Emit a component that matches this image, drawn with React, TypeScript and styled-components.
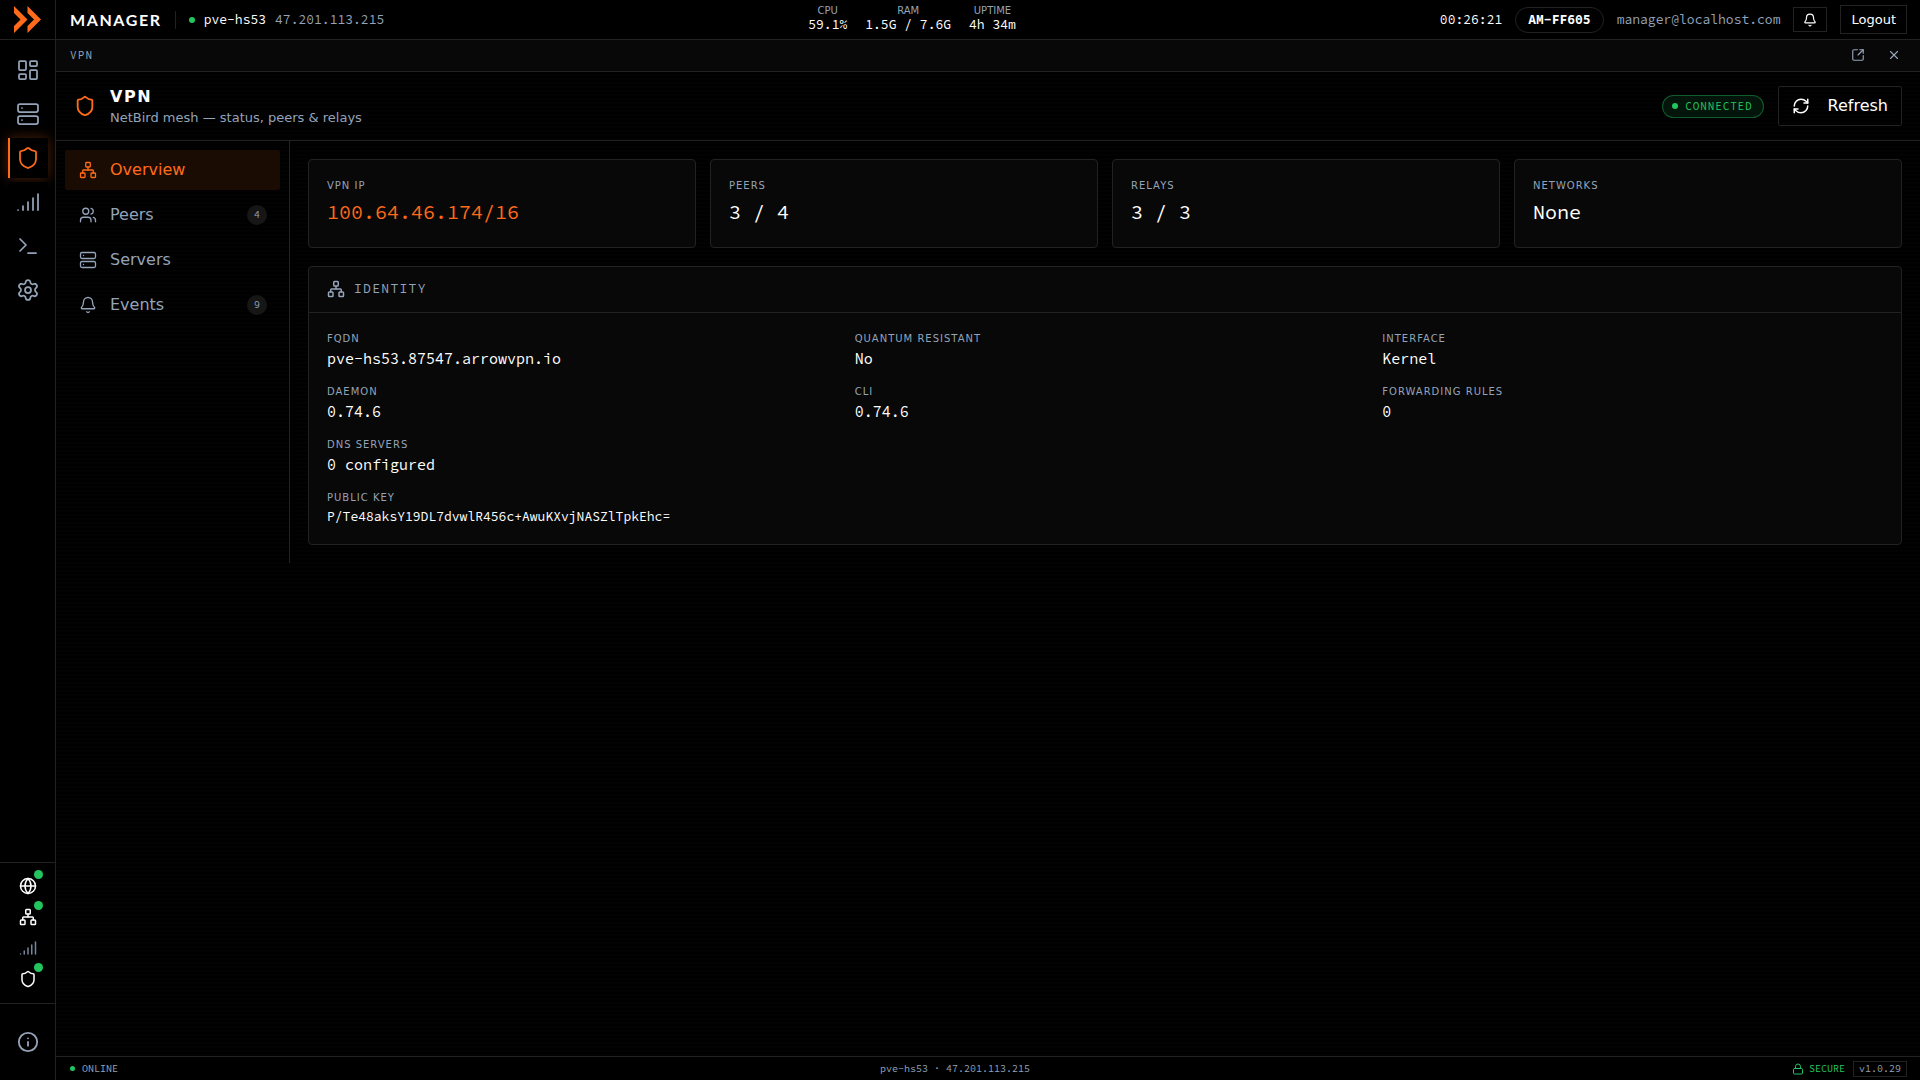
import React from "react";
import styled, { createGlobalStyle } from "styled-components";
import {
  Bell, Globe, Info, LayoutDashboard, Lock, Network, RefreshCw, Server, Settings,
  Shield, Signal, SquareArrowOutUpRight, Terminal, Users, X,
} from "lucide-react";

const sans = `"DejaVu Sans", sans-serif`;
const mono = `"Source Code Pro", "DejaVu Sans Mono", monospace`;
const line = "#222";
const muted = "#94a3b8";
const accent = "#ff6b1a";
const green = "#22c55e";

const Global = createGlobalStyle`
  * { box-sizing: border-box; }
  body { margin: 0; background: #000; color: #fff; font-family: ${sans}; font-size: 16px; }
  button { font: inherit; color: inherit; cursor: pointer; }
  h1, h2, p, dl, dd { margin: 0; font-weight: inherit; }
`;

const Shell = styled.div`
  display: grid;
  grid-template-columns: 56px minmax(0, 1fr);
  min-height: 100vh;
`;
const Rail = styled.aside`
  display: flex;
  flex-direction: column;
  border-right: 1px solid ${line};
`;
const Brand = styled.a`
  display: flex;
  align-items: center;
  justify-content: center;
  height: 40px;
  border-bottom: 1px solid ${line};
`;
const RailNav = styled.nav`
  flex: 1;
  display: flex;
  flex-direction: column;
  align-items: center;
  gap: 4px;
  padding-top: 10px;
`;
const RailButton = styled.button<{ $active?: boolean }>`
  display: flex;
  align-items: center;
  justify-content: center;
  width: 40px;
  height: 40px;
  padding: 0;
  border: 0;
  background: #000;
  color: ${(p) => (p.$active ? accent : muted)};
  box-shadow: ${(p) => (p.$active ? `inset 2px 0 0 ${accent}, 0 0 12px rgba(255, 107, 26, 0.3)` : "none")};
`;
const StatusList = styled.ul`
  display: flex;
  flex-direction: column;
  align-items: center;
  gap: 13px;
  margin: 0;
  padding: 14px 0 15px;
  list-style: none;
  border-top: 1px solid ${line};
  border-bottom: 1px solid ${line};
`;
const StatusItem = styled.li<{ $on: boolean }>`
  position: relative;
  display: flex;
  color: ${(p) => (p.$on ? "#fff" : "#7686a0")};
`;
const StatusDot = styled.span`
  position: absolute;
  top: -7px;
  right: -6px;
  width: 9px;
  height: 9px;
  border-radius: 50%;
  background: ${green};
`;
const RailFoot = styled.div`
  display: flex;
  justify-content: center;
  padding: 18px 0;
`;

const Main = styled.div`
  display: flex;
  flex-direction: column;
  min-width: 0;
`;
const Topbar = styled.header`
  display: flex;
  align-items: center;
  justify-content: space-between;
  height: 40px;
  padding: 0 13px 0 14px;
  border-bottom: 1px solid ${line};
  font: 13px/16px ${mono};
`;
const Group = styled.div<{ $gap: number }>`
  display: flex;
  align-items: center;
  gap: ${(p) => p.$gap}px;
`;
const Wordmark = styled.strong`
  font: 700 16px/20px Lato, sans-serif;
  letter-spacing: 0.1em;
`;
const Divider = styled.span`
  width: 1px;
  height: 18px;
  background: ${line};
`;
const Dot = styled.span<{ $size: number }>`
  width: ${(p) => p.$size}px;
  height: ${(p) => p.$size}px;
  border-radius: 50%;
  background: ${green};
`;
const Muted = styled.span`
  color: ${muted};
`;
const Stat = styled.div`
  display: flex;
  flex-direction: column;
  align-items: center;
  padding-bottom: 2px;
`;
const StatLabel = styled.span`
  font: 10px/12px ${sans};
  color: ${muted};
`;
const Tag = styled.span`
  padding: 4px 12px;
  border: 1px solid ${line};
  border-radius: 13px;
  font-weight: 700;
`;
const IconButton = styled.button`
  display: flex;
  align-items: center;
  justify-content: center;
  width: 34px;
  height: 25px;
  padding: 0;
  border: 1px solid ${line};
  background: transparent;
`;
const Logout = styled.button`
  height: 29px;
  padding: 0 10px;
  border: 1px solid ${line};
  background: transparent;
  font: 13px/16px ${sans};
`;

const TabBar = styled.div`
  display: flex;
  align-items: center;
  justify-content: space-between;
  height: 32px;
  padding: 0 13px 1px 14px;
  border-bottom: 1px solid ${line};
  background: #080808;
  color: ${muted};
  font: 11px/16px ${mono};
  letter-spacing: 0.1em;
`;
const PlainButton = styled.button`
  display: flex;
  padding: 6px;
  border: 0;
  background: transparent;
`;

const Page = styled.main`
  flex: 1;
  background: repeating-linear-gradient(180deg, #000 0 2px, #020202 2px 4px);
`;
const PageHead = styled.div`
  display: flex;
  align-items: center;
  justify-content: space-between;
  height: 69px;
  padding: 0 18px;
  border-bottom: 1px solid ${line};
`;
const Heading = styled.div`
  padding-top: 4px;
`;
const Title = styled.h1`
  font-size: 16px;
  font-weight: 700;
  line-height: 20px;
  letter-spacing: 0.1em;
`;
const Subtitle = styled.p`
  font-size: 13px;
  line-height: 22px;
  color: ${muted};
`;
const Connected = styled.span`
  display: flex;
  align-items: center;
  gap: 7px;
  height: 23px;
  padding: 0 10px 0 9px;
  border: 1px solid rgba(34, 197, 94, 0.4);
  border-radius: 12px;
  background: rgba(34, 197, 94, 0.1);
  color: ${green};
  font: 11px/16px ${mono};
  letter-spacing: 0.08em;
`;
const Refresh = styled.button`
  display: flex;
  align-items: center;
  gap: 18px;
  height: 40px;
  padding: 0 13px 1px;
  border: 1px solid ${line};
  border-radius: 2px;
  background: transparent;
`;

const Body = styled.div`
  display: grid;
  grid-template-columns: 234px minmax(0, 1fr);
`;
const SideNav = styled.nav`
  display: flex;
  flex-direction: column;
  gap: 5px;
  padding: 9px;
  border-right: 1px solid ${line};
`;
const SideLink = styled.a<{ $active?: boolean }>`
  display: flex;
  align-items: center;
  gap: 13px;
  height: 40px;
  padding: 0 13px 1px 14px;
  border-radius: 2px;
  background: ${(p) => (p.$active ? "#1a0b03" : "transparent")};
  color: ${(p) => (p.$active ? accent : muted)};
  text-decoration: none;
`;
const Count = styled.span`
  margin-left: auto;
  width: 20px;
  border-radius: 10px;
  background: #161616;
  font: 10px/20px ${mono};
  text-align: center;
`;
const Content = styled.div`
  display: flex;
  flex-direction: column;
  gap: 18px;
  padding: 18px;
`;
const Cards = styled.div`
  display: grid;
  grid-template-columns: repeat(4, minmax(0, 1fr));
  gap: 14px;
`;
const Panel = styled.section`
  border: 1px solid ${line};
  border-radius: 4px;
  background: #080808;
`;
const Card = styled(Panel)`
  padding: 18px;
  height: 89px;
`;
const Label = styled.dt`
  font-size: 10px;
  line-height: 16px;
  letter-spacing: 1px;
  color: ${muted};
`;
const Big = styled.dd<{ $accent?: boolean }>`
  margin-top: 4px;
  color: ${(p) => (p.$accent ? accent : "#fff")};
  font: 20px/28px ${mono};
`;
const PanelHead = styled.h2`
  display: flex;
  align-items: center;
  gap: 9px;
  height: 46px;
  padding: 0 18px 1px;
  border-bottom: 1px solid ${line};
  color: ${muted};
  font: 13px/16px ${mono};
  letter-spacing: 0.1em;
`;
const Fields = styled.dl`
  display: grid;
  grid-template-columns: repeat(3, minmax(0, 1fr));
  gap: 14px 27px;
  padding: 18px 18px 17px;
`;
const Field = styled.div<{ $wide?: boolean }>`
  grid-column: ${(p) => (p.$wide ? "1 / -1" : "auto")};
`;
const Value = styled.dd<{ $small?: boolean }>`
  margin-top: 1px;
  font: ${(p) => (p.$small ? "13px/20px" : "15px/22px")} ${mono};
`;

const Footer = styled.footer`
  display: flex;
  align-items: center;
  justify-content: space-between;
  height: 24px;
  padding: 0 13px 0 14px;
  border-top: 1px solid ${line};
  color: ${muted};
  font: 10px/14px ${mono};
`;
const Secure = styled.span`
  display: flex;
  align-items: center;
  gap: 5px;
  color: ${green};
`;
const Version = styled.span`
  padding: 0 5px;
  border: 1px solid ${line};
`;

const rail = [
  ["Dashboard", LayoutDashboard], ["Servers", Server], ["VPN", Shield],
  ["Signal", Signal], ["Terminal", Terminal], ["Settings", Settings],
] as const;
const statuses = [
  ["web", Globe, true], ["network", Network, true], ["signal", Signal, false], ["vpn", Shield, true],
] as const;
const stats = [["CPU", "59.1%"], ["RAM", "1.5G / 7.6G"], ["UPTIME", "4h 34m"]];
const sections = [
  ["Overview", Network, ""], ["Peers", Users, "4"], ["Servers", Server, ""], ["Events", Bell, "9"],
] as const;
const cards = [["VPN IP", "100.64.46.174/16"], ["PEERS", "3 / 4"], ["RELAYS", "3 / 3"], ["NETWORKS", "None"]];
const fields = [
  ["FQDN", "pve-hs53.87547.arrowvpn.io"], ["QUANTUM RESISTANT", "No"], ["INTERFACE", "Kernel"],
  ["DAEMON", "0.74.6"], ["CLI", "0.74.6"], ["FORWARDING RULES", "0"], ["DNS SERVERS", "0 configured"],
];

export default function App() {
  return (
    <Shell>
      <Global />
      <Rail>
        <Brand href="#" aria-label="Manager home">
          <svg width="27" height="27" viewBox="0 0 27 27" fill={accent}>
            <path d="M0 0 13.5 13.5 0 27V20L6.5 13.5 0 7Z" />
            <path d="M13.5 0 27 13.5 13.5 27V20L20 13.5 13.5 7Z" />
          </svg>
        </Brand>
        <RailNav aria-label="Main">
          {rail.map(([name, Icon]) => (
            <RailButton key={name} aria-label={name} $active={name === "VPN"}>
              <Icon size={24} strokeWidth={1.75} />
            </RailButton>
          ))}
        </RailNav>
        <StatusList>
          {statuses.map(([name, Icon, on]) => (
            <StatusItem key={name} $on={on}>
              <Icon size={18} strokeWidth={2} />
              {on && <StatusDot />}
            </StatusItem>
          ))}
        </StatusList>
        <RailFoot>
          <RailButton aria-label="About"><Info size={22} strokeWidth={2} /></RailButton>
        </RailFoot>
      </Rail>
      <Main>
        <Topbar>
          <Group $gap={13}>
            <Wordmark>MANAGER</Wordmark>
            <Divider />
            <Group $gap={9}>
              <Dot $size={6} />
              <span>pve-hs53</span>
              <Muted>47.201.113.215</Muted>
            </Group>
          </Group>
          <Group $gap={18}>
            {stats.map(([name, value]) => (
              <Stat key={name}><StatLabel>{name}</StatLabel><span>{value}</span></Stat>
            ))}
          </Group>
          <Group $gap={13}>
            <span>00:26:21</span>
            <Tag>AM-FF605</Tag>
            <Muted>manager@localhost.com</Muted>
            <IconButton aria-label="Notifications"><Bell size={14} /></IconButton>
            <Logout>Logout</Logout>
          </Group>
        </Topbar>
        <TabBar>
          <span>VPN</span>
          <Group $gap={10}>
            <PlainButton aria-label="Open in new window"><SquareArrowOutUpRight size={14} /></PlainButton>
            <PlainButton aria-label="Close"><X size={14} /></PlainButton>
          </Group>
        </TabBar>
        <Page>
          <PageHead>
            <Group $gap={14}>
              <Shield size={22} color={accent} />
              <Heading>
                <Title>VPN</Title>
                <Subtitle>NetBird mesh — status, peers &amp; relays</Subtitle>
              </Heading>
            </Group>
            <Group $gap={14}>
              <Connected><Dot $size={6} />CONNECTED</Connected>
              <Refresh><RefreshCw size={18} />Refresh</Refresh>
            </Group>
          </PageHead>
          <Body>
            <SideNav aria-label="VPN sections">
              {sections.map(([name, Icon, count]) => (
                <SideLink key={name} href="#" $active={name === "Overview"}>
                  <Icon size={18} strokeWidth={1.75} />
                  {name}
                  {count && <Count>{count}</Count>}
                </SideLink>
              ))}
            </SideNav>
            <Content>
              <Cards>
                {cards.map(([name, value], i) => (
                  <Card as="dl" key={name}><Label>{name}</Label><Big $accent={i === 0}>{value}</Big></Card>
                ))}
              </Cards>
              <Panel>
                <PanelHead><Network size={18} strokeWidth={2} />IDENTITY</PanelHead>
                <Fields>
                  {fields.map(([name, value]) => (
                    <Field key={name}><Label>{name}</Label><Value>{value}</Value></Field>
                  ))}
                  <Field $wide>
                    <Label>PUBLIC KEY</Label>
                    <Value $small>P/Te48aksY19DL7dvwlR456c+AwuKXvjNASZlTpkEhc=</Value>
                  </Field>
                </Fields>
              </Panel>
            </Content>
          </Body>
        </Page>
        <Footer>
          <Group $gap={7}><Dot $size={5} />ONLINE</Group>
          <span>pve-hs53 · 47.201.113.215</span>
          <Group $gap={8}>
            <Secure><Lock size={12} />SECURE</Secure>
            <Version>v1.0.29</Version>
          </Group>
        </Footer>
      </Main>
    </Shell>
  );
}
